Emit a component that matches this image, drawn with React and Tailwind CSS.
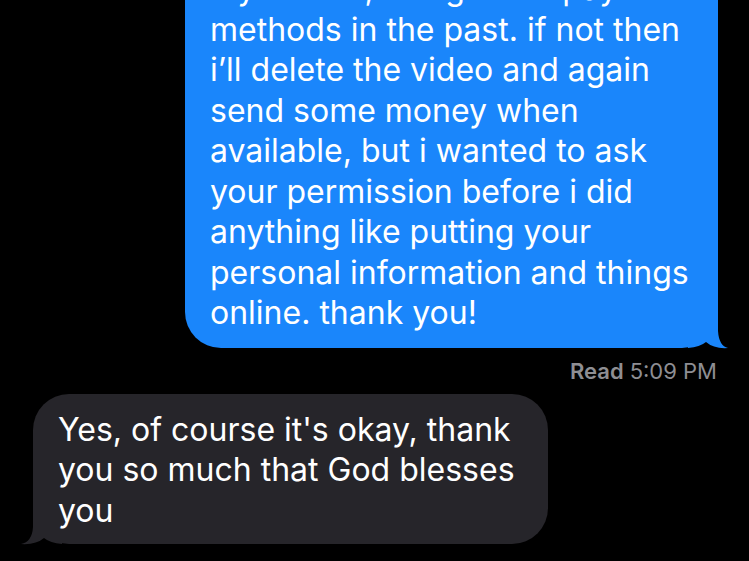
const lines = [
  "my videos, using other payment",
  "methods in the past. if not then",
  "i’ll delete the video and again",
  "send some money when",
  "available, but i wanted to ask",
  "your permission before i did",
  "anything like putting your",
  "personal information and things",
  "online. thank you!",
]

const App = () => {
  return (
    <div
      className="w-[749px] h-[561px] overflow-hidden bg-black"
      style={{ fontFamily: "Inter, 'Noto Sans', sans-serif" }}
    >
      {/* Sent message */}
      <div className="flex justify-end pr-[31px]">
        <div className="relative -mt-[43px] w-[533px] rounded-[36px] bg-[#1a86fb] pl-[25px] pr-[12px] pt-[12px] pb-[14px] text-[32px] leading-[40.5px] text-white">
          <svg
            className="absolute -right-[12px] -bottom-[1px]"
            width="42"
            height="43"
            viewBox="0 0 42 43"
          >
            <path d="M0 0 L30 0 L30 25 Q31 40 40 42 Q26 43 18 36 Q12 41 0 42 Z" fill="#1a86fb" />
          </svg>
          <div className="relative">
            {lines.map((line, i) => (
              <div key={i} className="whitespace-nowrap">
                {line}
              </div>
            ))}
          </div>
        </div>
      </div>

      {/* Read receipt */}
      <div className="flex justify-end pr-[32px] pt-[10px] text-[22px] leading-[26px] text-[#8e8e93]">
        <span className="font-semibold">Read</span>
        <span className="ml-[6px]">5:09 PM</span>
      </div>

      {/* Received message */}
      <div className="pl-[33px] pt-[10px]">
        <div className="relative w-[515px] rounded-[36px] bg-[#26252a] pl-[25px] pr-[12px] pt-[16px] pb-[13px] text-[32px] leading-[40.5px] text-white">
          <svg
            className="absolute -left-[13px] -bottom-[1px]"
            width="42"
            height="43"
            viewBox="0 0 42 43"
          >
            <path d="M42 0 L13 0 L13 25 Q12 40 1 42 Q16 43 24 36 Q30 41 42 42 Z" fill="#26252a" />
          </svg>
          <div className="relative">
            <div className="whitespace-nowrap">Yes, of course it's okay, thank</div>
            <div className="whitespace-nowrap">you so much that God blesses</div>
            <div>you</div>
          </div>
        </div>
      </div>
    </div>
  )
}

export default App
